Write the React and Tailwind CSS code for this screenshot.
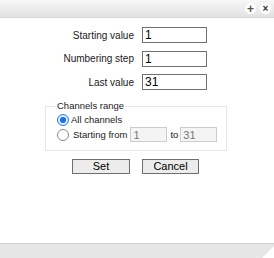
import React from "react";

function Field({ label, value }) {
  return (
    <div className="flex items-center h-[16px]">
      <span className="w-[134px] text-right text-[#1a1a1a]">{label}</span>
      <input
        type="text"
        defaultValue={value}
        className="ml-[8px] w-[65px] h-[16px] border border-[#707070] bg-white px-[2px] text-[12px] text-black outline-none"
      />
    </div>
  );
}

function Radio({ checked }) {
  if (checked) {
    return (
      <span className="w-[12px] h-[12px] rounded-full border border-[#2b7de1] bg-[#dcecfc] flex items-center justify-center">
        <span className="w-[6px] h-[6px] rounded-full bg-[#1a6fd8]" />
      </span>
    );
  }
  return <span className="w-[12px] h-[12px] rounded-full border border-[#8a8a8a] bg-white" />;
}

export default function App() {
  return (
    <div
      className="w-[274px] h-[258px] bg-white flex flex-col text-[10px] overflow-hidden"
      style={{ fontFamily: '"Liberation Sans", Arial, sans-serif' }}
    >
      {/* barre titre */}
      <div className="h-[18px] shrink-0 bg-gradient-to-b from-[#f7f7f7] to-[#e2e2e2] border-b border-[#d6d6d6] flex items-center justify-end gap-[4px] pr-[3px]">
        <span className="w-[11px] h-[11px] rounded-full bg-white flex items-center justify-center text-[#555] text-[12px] leading-none font-bold">
          +
        </span>
        <span className="w-[11px] h-[11px] rounded-full bg-white flex items-center justify-center text-[#333] text-[10px] leading-none font-bold">
          ×
        </span>
      </div>

      {/* contenu */}
      <div className="flex-1 flex flex-col pt-[9px]">
        <div className="flex flex-col gap-[7.5px]">
          <Field label="Starting value" value="1" />
          <Field label="Numbering step" value="1" />
          <Field label="Last value" value="31" />
        </div>

        <fieldset className="ml-[45px] mt-[9px] w-[182px] h-[52px] border border-[#e6e6e6] pl-[10px] pr-0 pb-0 text-[9.5px]">
          <legend className="px-[1px] text-[#1a1a1a]">Channels range</legend>
          <div className="flex items-center gap-[2px] ml-[1px] h-[14px]">
            <Radio checked />
            <span className="text-[#1a1a1a]">All channels</span>
          </div>
          <div className="flex items-center ml-[1px]">
            <Radio />
            <span className="ml-[4px] text-[#1a1a1a]">Starting from</span>
            <input
              type="text"
              disabled
              defaultValue="1"
              className="ml-[3px] w-[37px] h-[15px] border border-[#cccccc] bg-[#f4f4f4] px-[2px] text-[11px] text-[#777]"
            />
            <span className="ml-[3px] text-[#1a1a1a]">to</span>
            <input
              type="text"
              disabled
              defaultValue="31"
              className="ml-[2px] w-[37px] h-[15px] border border-[#cccccc] bg-[#f4f4f4] px-[2px] text-[11px] text-[#777]"
            />
          </div>
        </fieldset>

        <div className="flex gap-[12px] ml-[72px] mt-[8px]">
          <button className="w-[58px] h-[15px] border border-[#6e6e6e] bg-[#ececec] text-[11px] leading-none text-black">
            Set
          </button>
          <button className="w-[57px] h-[15px] border border-[#6e6e6e] bg-[#ececec] text-[11px] leading-none text-black">
            Cancel
          </button>
        </div>
      </div>

      {/* barre du bas */}
      <div className="h-[15px] shrink-0 bg-[#e6e6e6] border-t border-[#d2d2d2] relative">
        <svg className="absolute right-0 bottom-0" width="12" height="12" viewBox="0 0 12 12">
          <polygon points="12,0 12,12 0,12" fill="#ffffff" />
        </svg>
      </div>
    </div>
  );
}
